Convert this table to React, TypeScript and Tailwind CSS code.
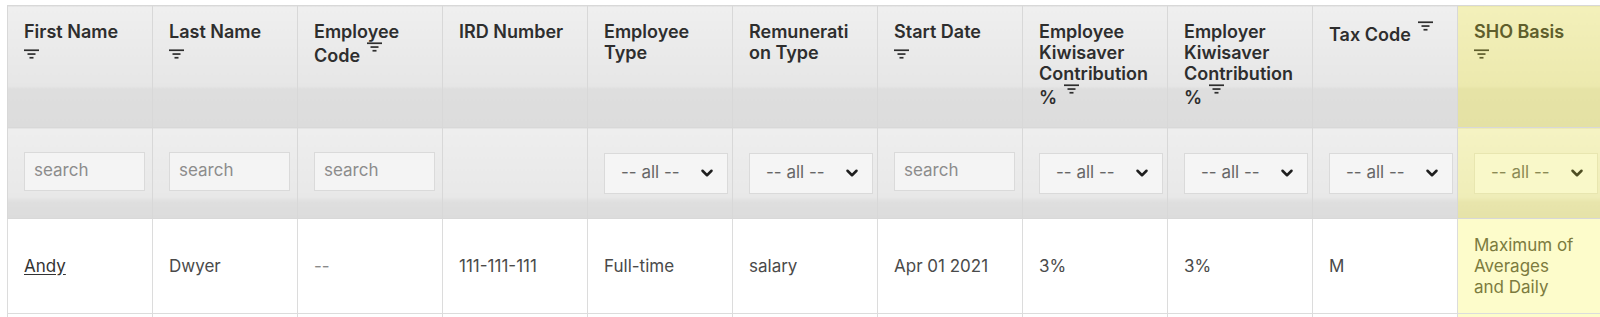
import { ChevronDown } from 'lucide-react';

type Col = {
  lines: string[];
  icon?: 'inline' | 'below';
  filter: 'search' | 'select' | 'none';
  value: string[];
  link?: boolean;
  muted?: boolean;
  sho?: boolean;
};

const cols: Col[] = [
  { lines: ['First Name'], icon: 'below', filter: 'search', value: ['Andy'], link: true },
  { lines: ['Last Name'], icon: 'below', filter: 'search', value: ['Dwyer'] },
  { lines: ['Employee', 'Code'], icon: 'inline', filter: 'search', value: ['--'], muted: true },
  { lines: ['IRD Number'], filter: 'none', value: ['111-111-111'] },
  { lines: ['Employee', 'Type'], filter: 'select', value: ['Full-time'] },
  { lines: ['Remunerati', 'on Type'], filter: 'select', value: ['salary'] },
  { lines: ['Start Date'], icon: 'below', filter: 'search', value: ['Apr 01 2021'] },
  { lines: ['Employee', 'Kiwisaver', 'Contribution', '%'], icon: 'inline', filter: 'select', value: ['3%'] },
  { lines: ['Employer', 'Kiwisaver', 'Contribution', '%'], icon: 'inline', filter: 'select', value: ['3%'] },
  { lines: ['Tax Code'], icon: 'inline', filter: 'select', value: ['M'] },
  {
    lines: ['SHO Basis'],
    icon: 'below',
    filter: 'select',
    value: ['Maximum of', 'Averages', 'and Daily'],
    sho: true,
  },
];

function FilterIcon({ className }: { className?: string }) {
  return (
    <svg width="15" height="10" viewBox="0 0 15 10" className={className}>
      <rect x="0" y="0.4" width="15" height="1.7" fill="currentColor" />
      <rect x="3.5" y="4.2" width="8" height="1.7" fill="currentColor" />
      <rect x="5.5" y="7.9" width="4" height="1.7" fill="currentColor" />
    </svg>
  );
}

export default function App() {
  return (
    <div className="w-[1600px] h-[317px] overflow-hidden bg-white pt-[5px] pl-[7px] font-['Inter','Liberation_Sans',sans-serif]">
      <table className="table-fixed border-collapse w-[1595px]">
        <colgroup>
          {cols.map((_, i) => (
            <col key={i} className="w-[145px]" />
          ))}
        </colgroup>
        <thead>
          {/* Column titles */}
          <tr className="h-[122px]">
            {cols.map((c, i) => (
              <th
                key={i}
                className={
                  'align-top text-left px-4 pt-[15px] border border-[#d8d8d8] text-[18px] font-semibold leading-[21px] ' +
                  (c.sho
                    ? 'bg-[linear-gradient(#f3f0ba,#ece9ae_66%,#e6e3a6_68%,#e4e1a4)] text-[#5f5e2c]'
                    : 'bg-[linear-gradient(#efefef,#e6e6e6_66%,#dedede_68%,#dcdcdc)] text-[#2e2e2e]')
                }
              >
                {c.lines.map((l, j) => (
                  <div key={j} className="whitespace-nowrap">
                    {l}
                    {c.icon === 'inline' && j === c.lines.length - 1 && (
                      <FilterIcon className="inline-block ml-[7px] align-[10px]" />
                    )}
                  </div>
                ))}
                {c.icon === 'below' && <FilterIcon className="block mt-[7px]" />}
              </th>
            ))}
          </tr>
          {/* Filters */}
          <tr className="h-[91px]">
            {cols.map((c, i) => (
              <th
                key={i}
                className={
                  'align-middle text-left px-4 border border-[#d8d8d8] font-normal ' +
                  (c.sho
                    ? 'bg-[linear-gradient(#f5f3c3,#efedb8_76%,#e8e5ac_82%,#e5e2a8)]'
                    : 'bg-[linear-gradient(#eeeeee,#e8e8e8_76%,#dedede_82%,#dcdcdc)]')
                }
              >
                {c.filter === 'search' && (
                  <div className="w-[121px] h-[39px] mb-[4px] bg-[#f4f4f4] border border-[#dadada] flex items-center px-[9px] text-[17px] text-[#8c8c8c]">
                    search
                  </div>
                )}
                {c.filter === 'select' && (
                  <div
                    className={
                      'w-[124px] h-[41px] flex items-center justify-between pl-[16px] pr-[11px] border text-[17px] ' +
                      (c.sho
                        ? 'bg-[#f9f8c9] border-[#e8e6b0] text-[#8b8a55]'
                        : 'bg-[#f5f5f5] border-[#dadada] text-[#666]')
                    }
                  >
                    <span>-- all --</span>
                    <ChevronDown
                      size={18}
                      strokeWidth={3.4}
                      className={c.sho ? 'text-[#4e4d22]' : 'text-[#1f1f1f]'}
                    />
                  </div>
                )}
              </th>
            ))}
          </tr>
        </thead>
        <tbody>
          <tr className="h-[95px]">
            {cols.map((c, i) => (
              <td
                key={i}
                className={
                  'align-middle px-4 border border-[#dcdcdc] text-[17px] leading-[21px] ' +
                  (c.sho ? 'bg-[#fdfccb] text-[#7c7b3e]' : 'bg-white text-[#4a4a4a]')
                }
              >
                {c.link ? (
                  <a className="underline text-[#333] underline-offset-2">{c.value[0]}</a>
                ) : (
                  c.value.map((v, j) => (
                    <div key={j} className={'whitespace-nowrap ' + (c.muted ? 'text-[#8a8a8a]' : '')}>
                      {v}
                    </div>
                  ))
                )}
              </td>
            ))}
          </tr>
          <tr className="h-[40px]">
            {cols.map((c, i) => (
              <td
                key={i}
                className={'border border-[#dcdcdc] ' + (c.sho ? 'bg-[#fdfccb]' : 'bg-white')}
              />
            ))}
          </tr>
        </tbody>
      </table>
    </div>
  );
}
